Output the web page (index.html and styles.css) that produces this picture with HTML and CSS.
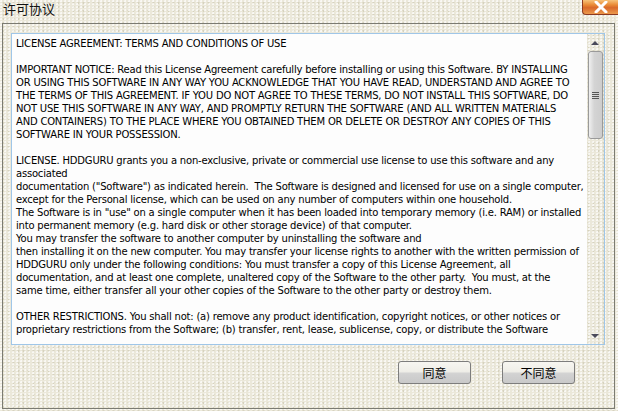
FILE: index.html
```html
<!DOCTYPE html>
<html lang="zh-CN">
<head>
    <meta charset="UTF-8">
    <title>许可协议</title>
    <link rel="stylesheet" href="styles.css">
</head>
<body>
    <div class="window">
        <div class="titlebar">
            <span class="title">许可协议</span>
            <button class="close" title="关闭">
                <svg width="14" height="12" viewBox="0 0 14 12">
                    <path d="M2 1 L12 11 M12 1 L2 11" stroke="#fff" stroke-width="3" stroke-linecap="round"/>
                </svg>
            </button>
        </div>

        <div class="frame">
            <div class="textbox">
                <div class="license">LICENSE AGREEMENT: TERMS AND CONDITIONS OF USE

IMPORTANT NOTICE: Read this License Agreement carefully before installing or using this Software. BY INSTALLING
OR USING THIS SOFTWARE IN ANY WAY YOU ACKNOWLEDGE THAT YOU HAVE READ, UNDERSTAND AND AGREE TO
THE TERMS OF THIS AGREEMENT. IF YOU DO NOT AGREE TO THESE TERMS, DO NOT INSTALL THIS SOFTWARE, DO
NOT USE THIS SOFTWARE IN ANY WAY, AND PROMPTLY RETURN THE SOFTWARE (AND ALL WRITTEN MATERIALS
AND CONTAINERS) TO THE PLACE WHERE YOU OBTAINED THEM OR DELETE OR DESTROY ANY COPIES OF THIS
SOFTWARE IN YOUR POSSESSION.

LICENSE. HDDGURU grants you a non-exclusive, private or commercial use license to use this software and any
associated
documentation ("Software") as indicated herein.  The Software is designed and licensed for use on a single computer,
except for the Personal license, which can be used on any number of computers within one household.
The Software is in "use" on a single computer when it has been loaded into temporary memory (i.e. RAM) or installed
into permanent memory (e.g. hard disk or other storage device) of that computer.
You may transfer the software to another computer by uninstalling the software and
then installing it on the new computer. You may transfer your license rights to another with the written permission of
HDDGURU only under the following conditions: You must transfer a copy of this License Agreement, all
documentation, and at least one complete, unaltered copy of the Software to the other party.  You must, at the
same time, either transfer all your other copies of the Software to the other party or destroy them.

OTHER RESTRICTIONS. You shall not: (a) remove any product identification, copyright notices, or other notices or
proprietary restrictions from the Software; (b) transfer, rent, lease, sublicense, copy, or distribute the Software</div>
                <div class="scrollbar">
                    <span class="arrow up"></span>
                    <div class="thumb">
                        <span class="grip"></span>
                    </div>
                    <div class="track"></div>
                    <span class="arrow down"></span>
                </div>
            </div>

            <div class="buttons">
                <button class="btn">同意</button>
                <button class="btn">不同意</button>
            </div>
        </div>
    </div>
</body>
</html>
```

FILE: styles.css
```css
body {
    margin: 0;
    width: 618px;
    height: 411px;
    overflow: hidden;
    background-color: #ebe8da;
    background-image:
        radial-gradient(circle at 30% 40%, rgba(255, 255, 255, 0.7) 0.8px, transparent 1.3px),
        radial-gradient(circle at 70% 70%, rgba(200, 195, 172, 0.6) 0.8px, transparent 1.3px);
    background-size: 4px 3px, 5px 4px;
    font-family: "DejaVu Sans", "Noto Sans CJK SC", sans-serif;
}
.window {
    display: flex;
    flex-direction: column;
    height: 411px;
}
.titlebar {
    height: 23px;
    display: flex;
    justify-content: space-between;
    align-items: flex-start;
}
.title {
    font-family: "Noto Sans CJK SC", sans-serif;
    font-size: 13px;
    line-height: 18px;
    padding: 0 0 0 3px;
    color: #111;
}
.close {
    width: 36px;
    height: 15px;
    padding: 0;
    margin: 0;
    border: 1px solid #8c3a22;
    border-top: none;
    border-right: none;
    border-radius: 0 0 0 4px;
    background: linear-gradient(#f6c27a 0%, #e98a36 35%, #d9692a 55%, #ec9a4e 100%);
    display: flex;
    align-items: center;
    justify-content: center;
}
.frame {
    flex: 1;
    margin: 0 3px 2px 2px;
    border: 1px solid #7b7b72;
    padding: 9px 9px 0 8px;
    display: flex;
    flex-direction: column;
}
.textbox {
    height: 310px;
    border: 1px solid #9fc6e8;
    display: flex;
}
.license {
    flex: 1;
    background: #fdfdfd;
    white-space: pre;
    overflow: hidden;
    font-size: 10px;
    letter-spacing: -0.2px;
    line-height: 13px;
    color: #000;
    padding: 3px 0 0 4px;
}
.scrollbar {
    width: 16px;
    margin-right: 1px;
    display: flex;
    flex-direction: column;
    align-items: center;
}
.arrow {
    width: 0;
    height: 0;
    border-left: 4px solid transparent;
    border-right: 4px solid transparent;
    margin: 7px 0 6px;
}
.arrow.up {
    border-bottom: 4px solid #4a4a5a;
}
.arrow.down {
    border-top: 4px solid #4a4a5a;
    margin: 0 0 6px;
}
.thumb {
    width: 13px;
    height: 86px;
    border: 1px solid #9a9a9a;
    border-radius: 3px;
    background: linear-gradient(90deg, #f0f0f0, #d4d4d4 40%, #cdcdcd);
    display: flex;
    align-items: center;
    justify-content: center;
}
.grip {
    width: 7px;
    height: 7px;
    background: repeating-linear-gradient(#555 0, #555 1px, transparent 1px, transparent 2px);
}
.track {
    flex: 1;
}
.buttons {
    display: flex;
    justify-content: flex-end;
    gap: 31px;
    padding: 16px 30px 0 0;
}
.btn {
    width: 73px;
    height: 23px;
    border: 1px solid #7d7d7d;
    border-radius: 3px;
    background: linear-gradient(#f7f6f1 0%, #efeee8 45%, #d2d2d2 55%, #c9c9c9 100%);
    font-family: "Noto Sans CJK SC", sans-serif;
    font-size: 12px;
    line-height: 18px;
    color: #000;
    padding: 0;
    cursor: pointer;
}
```
